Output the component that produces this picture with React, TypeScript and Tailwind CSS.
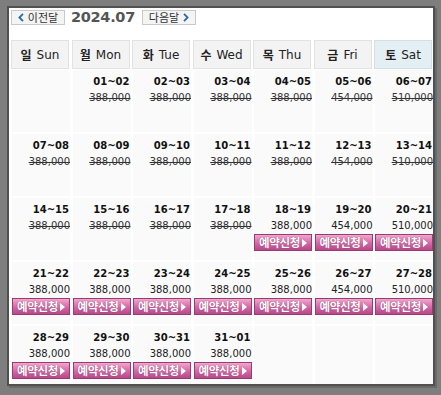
import React from 'react';

type Cell = { d: string; p: string; open: boolean } | null;

const days = [
    { ko: '일', en: 'Sun' },
    { ko: '월', en: 'Mon' },
    { ko: '화', en: 'Tue' },
    { ko: '수', en: 'Wed' },
    { ko: '목', en: 'Thu' },
    { ko: '금', en: 'Fri' },
    { ko: '토', en: 'Sat' }
];

const pad = (n: number) => (n < 10 ? '0' + n : '' + n);

// july 2024 starts on a monday, bookable from the 18th
const buildCells = (): Cell[] => {
    const cells: Cell[] = [null];
    for (let i = 1; i <= 31; i++) {
        const dow = i % 7; // 0 = sunday
        const p = dow === 5 ? '454,000' : dow === 6 ? '510,000' : '388,000';
        cells.push({ d: `${pad(i)}~${pad(i === 31 ? 1 : i + 1)}`, p, open: i >= 18 });
    }
    while (cells.length % 7 !== 0) cells.push(null);
    return cells;
};

const Chevron: React.FC<{ dir: 'left' | 'right' }> = ({ dir }) => (
    <svg width="6" height="9" viewBox="0 0 6 9" className="shrink-0">
        <path
            d={dir === 'left' ? 'M5 0.8 L1.4 4.5 L5 8.2' : 'M1 0.8 L4.6 4.5 L1 8.2'}
            fill="none"
            stroke="#2d6aa3"
            strokeWidth="1.8"
        />
    </svg>
);

const BookButton: React.FC = () => (
    <div className="h-[17px] w-full flex items-center justify-center gap-[2px] border border-[#9a3a72] bg-gradient-to-b from-[#f0a6cf] via-[#d66ca8] to-[#b7478a] text-white text-[11.5px] font-bold leading-none [text-shadow:0_0_1px_#7a2457]">
        <span className="font-['Noto_Sans_CJK_KR',sans-serif] tracking-[-0.3px]">예약신청</span>
        <svg width="5" height="8" viewBox="0 0 5 8" className="shrink-0">
            <path d="M0 0 L5 4 L0 8 Z" fill="#fff" />
        </svg>
    </div>
);

const App: React.FC = () => {
    const cells = buildCells();

    return (
        <div className="w-[441px] h-[395px] bg-[#7e7e7e] pt-[6px] pl-[7px] font-['DejaVu_Sans','Noto_Sans_CJK_KR',sans-serif]">
            <div className="w-[428px] h-[380px] border-2 border-[#505050] bg-white overflow-hidden shadow-[2px_2px_0_#6a6a6a]">
                <div className="flex items-center pl-[2px] pt-[1px] h-[18px]">
                    <div className="h-[15px] w-[54px] flex items-center justify-center gap-[4px] border border-[#c9c9c9] bg-[#f4f4f4] text-[11px] text-[#333] leading-none">
                        <Chevron dir="left" />
                        <span className="font-['Noto_Sans_CJK_KR',sans-serif]">이전달</span>
                    </div>
                    <span className="ml-[6px] text-[14.5px] font-bold text-[#555] leading-none tracking-[-0.3px]">2024.07</span>
                    <div className="ml-[7px] h-[15px] w-[54px] flex items-center justify-center gap-[4px] border border-[#c9c9c9] bg-[#f4f4f4] text-[11px] text-[#333] leading-none">
                        <span className="font-['Noto_Sans_CJK_KR',sans-serif]">다음달</span>
                        <Chevron dir="right" />
                    </div>
                </div>

                <div className="mt-[14px] pl-[2px] grid grid-cols-[repeat(7,58px)] gap-x-[2.5px] w-[440px]">
                    {days.map((day, i) => (
                        <div
                            key={day.en}
                            className={`h-[29px] flex items-center justify-center gap-[5px] border text-[12px] text-[#222] ${
                                i === 6 ? 'bg-[#e3eff3] border-[#cfe0e6]' : 'bg-[#f3f3f3] border-[#e2e2e2]'
                            }`}>
                            <span className="font-bold font-['Noto_Sans_CJK_KR',sans-serif]">{day.ko}</span>
                            <span>{day.en}</span>
                        </div>
                    ))}
                </div>

                <div className="mt-[1px] pl-[3px] grid grid-cols-[repeat(7,58px)] auto-rows-[62px] gap-x-[2.5px] gap-y-[2px] w-[440px]">
                    {cells.map((c, i) => (
                        <div key={i} className="bg-[#fafafa] pt-[4px] flex flex-col items-end">
                            {c && (
                                <>
                                    <span className="text-[10px] leading-[16px] font-bold text-[#111] pr-[1px]">{c.d}</span>
                                    <span
                                        className={`text-[10px] leading-[16px] ${
                                            c.open ? 'text-[#222]' : 'text-[#333] line-through'
                                        }`}>
                                        {c.p}
                                    </span>
                                    {c.open && <BookButton />}
                                </>
                            )}
                        </div>
                    ))}
                </div>
            </div>
        </div>
    );
};

export default App;
